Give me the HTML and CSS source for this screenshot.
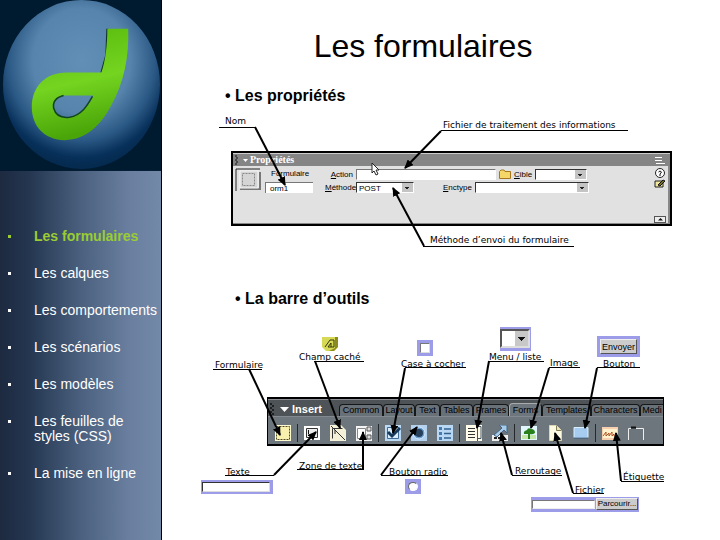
FILE: index.html
```
<!DOCTYPE html>
<html lang="fr">
<head>
<meta charset="utf-8">
<title>Les formulaires</title>
<link rel="stylesheet" href="styles.css">
</head>
<body>
<div class="slide">
  <aside class="sidebar">
    <svg class="logo" viewBox="0 0 162 172" role="img" aria-label="Logo">
      <defs>
        <radialGradient id="ball" cx="0.5" cy="0.36" r="0.62">
          <stop offset="0" stop-color="#628fb6"/>
          <stop offset="0.5" stop-color="#5684ac"/>
          <stop offset="0.75" stop-color="#2c5a86"/>
          <stop offset="0.92" stop-color="#07305a"/>
          <stop offset="1" stop-color="#052b50"/>
        </radialGradient>
        <linearGradient id="leaf" x1="0" y1="0" x2="0.2" y2="1">
          <stop offset="0" stop-color="#58b80c"/>
          <stop offset="0.55" stop-color="#74d420"/>
          <stop offset="1" stop-color="#4aa508"/>
        </linearGradient>
      </defs>
      <rect width="162" height="172" fill="#001a30"/>
      <ellipse cx="82" cy="85" rx="79" ry="85" fill="url(#ball)"/>
      <path d="M107 29 106 55 101 73 105 73 109 55 109 29Z" fill="#12342a"/>
      <path fill-rule="evenodd" fill="url(#leaf)" d="M108 29H129C130 56 125 83 112 106C102 125 87 141 65 141C45 141 32 127 32 108C32 87 46 73 67 73H102C106 62 108 45 108 29ZM94 96H65C57 97 53 102 54 109C56 116 62 119 70 118C82 116 90 105 94 96Z"/>
      <path d="M64 96C56 98 53 103 54 109C56 116 62 119 70 118C82 116 88 106 93 97" fill="none" stroke="#12451f" stroke-width="1.5"/>
    </svg>
    <nav>
      <ul class="menu">
        <li class="current"><a href="#formulaires">Les formulaires</a></li>
        <li><a href="#calques">Les calques</a></li>
        <li><a href="#comportements">Les comportements</a></li>
        <li><a href="#scenarios">Les scénarios</a></li>
        <li><a href="#modeles">Les modèles</a></li>
        <li><a href="#css">Les feuilles de styles (CSS)</a></li>
        <li><a href="#ligne">La mise en ligne</a></li>
      </ul>
    </nav>
  </aside>

  <main class="content" id="formulaires">
    <h1>Les formulaires</h1>

    <h2>• Les propriétés</h2>
    <figure class="diagram properties">
      <section class="panel" aria-label="Propriétés">
        <header class="panel-title">
          <svg class="grip" viewBox="0 0 14 12" aria-hidden="true"><path d="M1 2h2M2 4h2M1 6h2M2 8h2M1 10h2" stroke="#111"/><path d="M9 5h5l-2.500 3z" fill="#fff"/></svg>
          <span>Propriétés</span>
          <svg class="options" viewBox="0 0 10 8" aria-hidden="true"><path d="M0 1.500h7M0 4.500h7M1 7.500h9" stroke="#fff"/></svg>
        </header>
        <div class="panel-body">
          <svg class="form-icon" viewBox="0 0 26 24" aria-hidden="true"><path d="M1 23V1h24" fill="none" stroke="#222"/><path d="M5 21h20V4" fill="none" stroke="#777" stroke-width="2"/><rect x="5" y="3" width="18" height="17" fill="#d5d5d5" stroke="#f7f7f7"/><rect x="7.500" y="5.500" width="12" height="12" fill="none" stroke="#888" stroke-dasharray="2 1"/></svg>
          <div class="name-field">
            <label for="name">Formulaire</label>
            <input id="name" type="text" value="orm1">
          </div>
          <div class="settings">
            <div class="row">
              <label class="lead" for="action"><u>A</u>ction</label>
              <input class="action" id="action" type="text">
              <svg class="folder" viewBox="0 0 12 11" aria-hidden="true"><path d="M.5 9.500V2.500L2 1h3l1 1.500h5.500v7z" fill="#f5d668" stroke="#a5781d"/></svg>
              <label for="target"><u>C</u>ible</label>
              <select class="target" id="target"><option></option></select>
            </div>
            <div class="row">
              <label class="lead" for="method"><u>M</u>éthode</label>
              <select class="method" id="method"><option>POST</option></select>
              <label class="enctype-label" for="enctype"><u>E</u>nctype</label>
              <select class="enctype" id="enctype"><option></option></select>
            </div>
          </div>
          <svg class="panel-tools" viewBox="0 0 14 58" aria-hidden="true"><circle cx="7" cy="5" r="4.500" fill="#fff" stroke="#222"/><path d="M5.500 4q1.500-2 3 0l-1.500 2v2" fill="none" stroke="#111"/><path d="M2 13h8v6H2z" fill="#f1e79a" stroke="#222"/><path d="M5 17l5-5 2 1-5 5z" fill="#776c22" stroke="#111"/><rect x="1.500" y="48.500" width="11" height="6" fill="#eee" stroke="#555"/><path d="M5 52.500h5L7.500 50z" fill="#111"/></svg>
        </div>
      </section>
      <svg class="callouts" viewBox="162 112 558 138">
        <defs><marker id="tip" viewBox="0 0 9 8" refX="8" refY="4" markerWidth="9" markerHeight="8" markerUnits="userSpaceOnUse" orient="auto"><path d="M0 0 9 4 0 8z"/></marker></defs>
        <path class="cursor" d="M372 163v10l2-2 2 4 2-1-2-4h3z"/>
        <g class="rules"><path d="M219 127.500h37"/><path d="M441 130.500h187"/><path d="M423 246.500h151"/></g>
        <g class="arrows"><path d="M255 127 285 185"/><path d="M441 131 405 168"/><path d="M424 246 393 188"/></g>
        <g class="labels">
          <text x="225" y="124">Nom</text>
          <text x="443" y="128">Fichier de traitement des informations</text>
          <text x="430" y="243">Méthode d’envoi du formulaire</text>
        </g>
      </svg>
    </figure>

    <h2 class="second">• La barre d’outils</h2>
    <figure class="diagram toolbar-diagram">
      <section class="toolbar" aria-label="Insert">
        <div class="tabs">
          <span class="insert"><svg class="insert-mark" viewBox="0 0 21 14" aria-hidden="true"><path d="M2 2h2M4 4h2M2 6h2M4 8h2M2 10h2M4 12h2" stroke="#111" stroke-width="1.500"/><path d="M12 5h9l-4.500 5z" fill="#fff"/></svg>Insert</span>
          <button class="tab common">Common</button><button class="tab layout">Layout</button><button class="tab text">Text</button><button class="tab tables">Tables</button><button class="tab frames">Frames</button><button class="tab active">Forms</button><button class="tab templates">Templates</button><button class="tab characters">Characters</button><button class="tab media">Medi</button>
        </div>
        <div class="tools">
          <div class="group">
            <button aria-label="Formulaire"><svg viewBox="0 0 16 16"><path d="M0 0h16v16H0z" fill="#fffbd0"/><rect x="1.500" y="1.500" width="13" height="13" fill="#f8f2ae" stroke="#514a20" stroke-dasharray="2 1"/></svg></button>
          </div>
          <div class="group">
            <button aria-label="Texte"><svg viewBox="0 0 16 16"><rect y="1" width="16" height="14" fill="#fff"/><path d="M2.500 3.500h11v9h-11z" fill="#eee" stroke="#333"/><path d="M4.500 5v4" stroke="#111"/></svg></button>
            <button aria-label="Champ caché"><svg viewBox="0 0 16 16"><path d="M0 0h11l5 5v11H0z" fill="#f4f1d8"/><path d="M2.500 13.500v-10h10M1 1l14 14" fill="none" stroke="#333"/><path d="M5 5v4" stroke="#222"/></svg></button>
            <button aria-label="Zone de texte"><svg viewBox="0 0 16 16"><path d="M0 1h16v15H0z" fill="#f4f4f4"/><path d="M1.500 3.500h8v10h-8z" fill="#fff" stroke="#888"/><path d="M11 2h4v4h-4zM11 10h4v4h-4z" fill="#ddd" stroke="#555"/></svg></button>
          </div>
          <div class="group">
            <button aria-label="Case à cocher"><svg viewBox="0 0 16 16"><path d="M0 0h16v16H0z" fill="#b9d9f4"/><path d="M2.500 2.500h11v11h-11z" fill="#d9edfc" stroke="#416b92"/><path d="M3 7l4 4 8-8" fill="none" stroke="#16395b" stroke-width="3"/></svg></button>
            <button aria-label="Bouton radio"><svg viewBox="0 0 16 16"><path d="M0 0h16v16H0z" fill="#b3d2f0"/><circle cx="8" cy="8" r="6" fill="#6da1d1" stroke="#d8eaff"/><circle cx="8" cy="8" r="4" fill="#263f5b"/></svg></button>
            <button aria-label="Groupe de boutons radio"><svg viewBox="0 0 16 16"><path d="M0 0h16v16H0z" fill="#b8d8f5"/><path d="M2 2h3v3H2zM2 7h3v3H2zM2 12h3v3H2z" fill="#477bae"/><path d="M7 4h7M7 8.500h7M7 13h7" stroke="#315f8d" stroke-width="1.500"/></svg></button>
          </div>
          <div class="group">
            <button aria-label="Menu / liste"><svg viewBox="0 0 16 16"><path d="M0 0h16v16H0z" fill="#fffce9"/><path d="M2 3.500h7M2 6.500h7M2 9.500h7M2 12.500h7" stroke="#333"/><path d="M11.500 0v16M11 1.500h4v12h-4" fill="none" stroke="#456"/></svg></button>
            <button aria-label="Reroutage"><svg viewBox="0 0 16 16"><path d="M0 10h16v6H0z" fill="#eee"/><path d="M2 13h12" stroke="#222" stroke-width="2" stroke-dasharray="3 1"/><path d="M2 10 10 3 7 0h8v8l-3-3-7 7z" fill="#a8cbe8" stroke="#436487"/></svg></button>
          </div>
          <div class="group">
            <button aria-label="Image"><svg viewBox="0 0 16 16"><path d="M0 1h16v14H0z" fill="#e2f6ff"/><path d="M1 10h14v4H1z" fill="#c5e6a9"/><path d="M3 9q-1-3 3-4 1-3 4-1 4 0 4 4-3 2-5 1v5H7V9z" fill="#278118"/></svg></button>
            <button aria-label="Fichier"><svg viewBox="0 0 16 16"><path d="M2.500.5h7l5 5v10h-12z" fill="#fffbe1" stroke="#ddd6b6"/><path d="M9.500.5v5h5" fill="#eee6b6" stroke="#817a59"/></svg></button>
            <button aria-label="Bouton"><svg viewBox="0 0 16 16"><path d="M1 2.500h14v10H1z" fill="#a6cdf0" stroke="#d9efff"/><path d="M1 13h14" stroke="#315b86"/></svg></button>
          </div>
          <div class="group">
            <button aria-label="Étiquette"><svg viewBox="0 0 16 16"><path d="M0 2h16v13H0z" fill="#f7cfae"/><path d="M1 4h14v9H1z" fill="#fff2cd"/><path d="M1 11l3-4v4l3-3v3l3-4v4l2-2v2h3" fill="none" stroke="#b05024"/></svg></button>
            <button aria-label="Jeu de champs"><svg viewBox="0 0 16 16"><path d="M.5 15V3.500H3M8 3.500h7.500V15" fill="none" stroke="#eee"/><path d="M3 2.500h5" stroke="#111" stroke-width="2"/></svg></button>
          </div>
        </div>
      </section>

      <svg class="sample hidden-field" viewBox="0 0 16 15" role="img" aria-label="Champ caché"><path d="M0 1h16v10l-4 4H4l-4-4z" fill="#d6d956"/><path d="M13 1h3v10l-4 4H7l6-3z" fill="#8c8c1d"/><path d="M3 11l5-7h4v7H6l3-4v4" fill="none" stroke="#333707"/></svg>
      <span class="sample check-sample"><input type="checkbox" aria-label="Case à cocher"></span>
      <span class="sample list-sample"><select aria-label="Menu / liste"><option></option></select></span>
      <span class="sample button-sample"><button>Envoyer</button></span>
      <span class="sample text-sample"><input type="text" aria-label="Texte"></span>
      <span class="sample radio-sample"><input type="radio" aria-label="Bouton radio"></span>
      <span class="sample file-sample"><input type="text" aria-label="Fichier"><button>Parcourir...</button></span>

      <svg class="callouts" viewBox="162 322 558 196">
        <g class="rules">
          <path d="M213 369.500h49"/><path d="M314 361.500h50"/><path d="M405 367.500h61"/><path d="M489 361.500h55"/><path d="M549 367.500h31"/><path d="M597 367.500h43"/>
          <path d="M225 475.500h49"/><path d="M297 469.500h67"/><path d="M381 475.500h67"/><path d="M512 475.500h50"/><path d="M573 493.500h31"/><path d="M621 481.500h43"/>
        </g>
        <g class="arrows">
          <path d="M249 369 280 435"/><path d="M315 361 340 428"/><path d="M405 368 393 433"/><path d="M489 361 477 428"/><path d="M549 368 531 428"/><path d="M597 368 585 428"/>
          <path d="M274 475 316 432"/><path d="M363 469V432"/><path d="M381 475 417 427"/><path d="M512 475 501 433"/><path d="M573 493 555 433"/><path d="M621 481 616 433"/>
        </g>
        <g class="labels">
          <text x="215" y="368">Formulaire</text><text x="299" y="360">Champ caché</text><text x="401" y="367">Case à cocher</text><text x="489" y="360">Menu / liste</text><text x="550" y="366">Image</text><text x="603" y="367">Bouton</text>
          <text x="226" y="475">Texte</text><text x="299" y="469">Zone de texte</text><text x="389" y="475">Bouton radio</text><text x="515" y="474">Reroutage</text><text x="575" y="493">Fichier</text><text x="623" y="480">Étiquette</text>
        </g>
      </svg>
    </figure>
  </main>
</div>
</body>
</html>
```
FILE: styles.css
```
* { box-sizing: border-box; }
body { margin: 0; background: #fff; color: #000; font-family: "Liberation Sans", Arial, sans-serif; }
button, input, select { margin: 0; padding: 0; border: 0; border-radius: 0; font: inherit; color: inherit; }
svg { display: block; }

.slide { display: grid; grid-template-columns: 162px 1fr; min-height: 100vh; }

.sidebar { background: linear-gradient(90deg, #1d2a40 0%, #243650 18%, #4a607e 50%, #6a7f9f 80%, #7389a8 100%); border-right: 1px solid #000; }
.logo { width: 100%; }
.menu { list-style: none; margin: 0; padding: 58px 4px 0 8px; display: grid; gap: 22px; font-size: 14px; line-height: 15px; color: #fff; }
.menu li { display: grid; grid-template-columns: 26px 1fr; }
.menu li::before { content: ""; width: 3px; height: 3px; margin-top: 6px; background: currentColor; }
.menu a { color: inherit; text-decoration: none; }
.menu .current { color: #9acd32; font-weight: bold; }

.content { width: 558px; margin: 0 auto; padding-top: 28px; }
h1 { margin: 0 36px 0 0; font-size: 32px; line-height: 36px; font-weight: normal; text-align: center; }
h2 { margin: 22px 0 0 63px; font-size: 16px; line-height: 20px; }
h2.second { margin: 39px 0 0 73px; }

.diagram { position: relative; margin: 0; }
.properties { height: 138px; margin-top: 6px; padding: 39px 48px 0 69px; }
.toolbar-diagram { height: 196px; margin-top: 13px; padding: 75px 56px 0 105px; }
.callouts { position: absolute; inset: 0; width: 100%; height: 100%; pointer-events: none; }
.rules path { stroke: #000; stroke-width: 1px; }
.arrows path { stroke: #000; stroke-width: 2px; marker-end: url(#tip); }
.labels { font-family: "DejaVu Sans", Verdana, sans-serif; font-size: 9px; }
.cursor { fill: #fff; stroke: #222; stroke-width: 1px; }

.panel { height: 75px; border: 2px solid #000; background: #e1e1e1; box-shadow: inset -2px -1px #888; font-size: 8px; line-height: 11px; }
.panel-title { display: flex; align-items: center; gap: 2px; height: 13px; padding: 0 5px 0 1px; background: #858585; border-top: 1px solid #ccc; color: #fff; font-family: "Liberation Serif", serif; font-size: 10px; line-height: 10px; font-weight: bold; }
.panel-title span { padding-bottom: 1px; }
.grip { width: 14px; height: 12px; }
.options { width: 10px; height: 8px; margin-left: auto; }
.panel-body { display: flex; padding: 2px 3px 0 2px; }
.form-icon { width: 26px; height: 24px; }
.name-field { display: grid; align-content: start; width: 48px; margin-left: 4px; }
.name-field label { padding-left: 6px; }
.name-field input { width: 48px; height: 11px; margin-top: 3px; padding-left: 4px; border-top: 1px solid #777; border-left: 1px solid #777; background: #fff; }
.settings { display: grid; gap: 1px; align-content: start; margin-left: 12px; }
.row { display: flex; align-items: center; gap: 3px; height: 12px; }
.lead { width: 28px; text-align: right; }
.row input, .row select { height: 11px; border: 1px solid #fff; border-top-color: #777; border-left-color: #777; background-color: #fff; }
.row select { appearance: none; padding-left: 2px; border-color: #333 #fff #fff #333; background-image: linear-gradient(#222, #222), linear-gradient(#222, #222), linear-gradient(#c4c4c4, #c4c4c4); background-position: right 4px top 4px, right 5px top 5px, right; background-size: 4px 1px, 2px 1px, 11px 100%; background-repeat: no-repeat; }
.row .action { width: 140px; }
.folder { width: 12px; height: 11px; }
.row .target { width: 52px; }
.row .method { width: 58px; }
.enctype-label { padding-left: 26px; }
.row .enctype { width: 114px; }
.panel-tools { width: 14px; height: 58px; margin-left: auto; }

.toolbar { height: 49px; border: 1px solid #000; border-width: 2px 1px; background: #6d767d; overflow: hidden; }
.tabs { display: flex; align-items: flex-end; height: 18px; padding-top: 4px; background: #4e5358; border-bottom: 1px solid #83898e; border-top: 1px solid #8b8f93; }
.insert { display: flex; flex: 0 0 71px; align-items: center; gap: 3px; color: #fff; font-size: 11px; line-height: 14px; font-weight: bold; }
.insert-mark { width: 21px; height: 14px; }
.tab { flex: none; height: 12px; border: 1px solid #151719; border-width: 1px 1px 0 1px; border-radius: 4px 4px 0 0; background: #697178; font-size: 9px; line-height: 11px; text-align: center; }
.tab.common { width: 44px; }
.tab.layout { width: 32px; }
.tab.text { width: 25px; }
.tab.tables { width: 33px; }
.tab.frames { width: 36px; }
.tab.active { width: 33px; height: 13px; border-color: #aaa #111 #111 #aaa; background: #6d767d; }
.tab.templates { width: 49px; }
.tab.characters { width: 49px; }
.tab.media { flex: 1; border-right: 0; border-top-right-radius: 0; }
.tools { display: flex; padding: 7px 0 0 1px; }
.group { display: flex; gap: 10px; padding: 0 6px; border-right: 1px solid #25292c; }
.group:last-child { border: 0; }
.group button { width: 16px; height: 18px; background: none; }
.group svg { width: 16px; height: 16px; }

.sample { position: absolute; display: flex; background: #9c9ce8; }
.hidden-field { left: 160px; top: 14px; width: 16px; height: 15px; background: none; }
.check-sample { left: 255px; top: 18px; padding: 3px; }
.check-sample input { appearance: none; width: 10px; height: 10px; border: 1px solid #777; border-right-color: #ddd; border-bottom-color: #ddd; background: #fff; }
.list-sample { left: 338px; top: 5px; padding: 2px 1px 3px 0; }
.list-sample select { appearance: none; width: 30px; height: 19px; border: 2px solid #555; border-right-color: #ddd; border-bottom-color: #ddd; background: conic-gradient(from 315deg at 50% 100%, #111 90deg, transparent 0) right 3px top 6px / 7px 4px no-repeat, linear-gradient(#c8c8c8, #c8c8c8) right / 13px 100% no-repeat, #fff; }
.button-sample { left: 435px; top: 14px; padding: 3px; }
.button-sample button, .file-sample button { border: 1px solid #eee; border-right-color: #555; border-bottom-color: #555; background: #ccc; font-size: 9px; line-height: 10px; }
.button-sample button { width: 37px; height: 15px; }
.text-sample { left: 39px; top: 158px; padding: 2px 3px 2px 1px; }
.text-sample input { width: 68px; height: 10px; border: 1px solid #333; border-right-color: #ddd; border-bottom-color: #ddd; background: #fff; }
.radio-sample { left: 243px; top: 157px; padding: 3px; }
.radio-sample input { appearance: none; width: 10px; height: 9px; border: 1px solid #666; border-right-color: #fff; border-bottom-color: #fff; border-radius: 50%; background: #fff; }
.file-sample { left: 369px; top: 175px; gap: 1px; padding: 1px 1px 2px; }
.file-sample input { width: 63px; height: 9px; margin-top: 2px; border: 1px solid #777; border-right-color: #eee; border-bottom-color: #eee; background: #fff; }
.file-sample button { width: 42px; height: 12px; font-size: 8px; }
```
